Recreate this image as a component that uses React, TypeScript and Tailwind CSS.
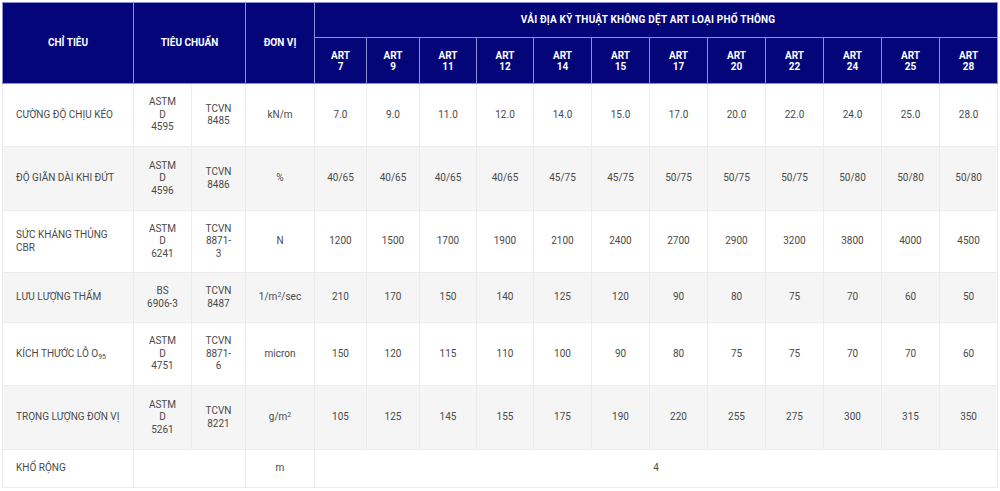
const arts = ["7", "9", "11", "12", "14", "15", "17", "20", "22", "24", "25", "28"];
const artWidths = [52, 53, 57, 57, 58, 58, 58, 58, 58, 58, 58, 58];

type Row = {
  name: React.ReactNode;
  astm: React.ReactNode;
  tcvn: React.ReactNode;
  unit: React.ReactNode;
  values: string[];
  h: string;
};

const rows: Row[] = [
  {
    name: "CƯỜNG ĐỘ CHỊU KÉO",
    astm: <>ASTM<br />D<br />4595</>,
    tcvn: <>TCVN<br />8485</>,
    unit: "kN/m",
    values: ["7.0", "9.0", "11.0", "12.0", "14.0", "15.0", "17.0", "20.0", "22.0", "24.0", "25.0", "28.0"],
    h: "h-[63px]",
  },
  {
    name: "ĐỘ GIÃN DÀI KHI ĐỨT",
    astm: <>ASTM<br />D<br />4596</>,
    tcvn: <>TCVN<br />8486</>,
    unit: "%",
    values: ["40/65", "40/65", "40/65", "40/65", "45/75", "45/75", "50/75", "50/75", "50/75", "50/80", "50/80", "50/80"],
    h: "h-[64px]",
  },
  {
    name: <>SỨC KHÁNG THỦNG<br />CBR</>,
    astm: <>ASTM<br />D<br />6241</>,
    tcvn: <>TCVN<br />8871-<br />3</>,
    unit: "N",
    values: ["1200", "1500", "1700", "1900", "2100", "2400", "2700", "2900", "3200", "3800", "4000", "4500"],
    h: "h-[62px]",
  },
  {
    name: "LƯU LƯỢNG THẤM",
    astm: <>BS<br />6906-3</>,
    tcvn: <>TCVN<br />8487</>,
    unit: <>1/m<sup className="text-[7px]">2</sup>/sec</>,
    values: ["210", "170", "150", "140", "125", "120", "90", "80", "75", "70", "60", "50"],
    h: "h-[50px]",
  },
  {
    name: <>KÍCH THƯỚC LỖ O<sub className="text-[7px]">95</sub></>,
    astm: <>ASTM<br />D<br />4751</>,
    tcvn: <>TCVN<br />8871-<br />6</>,
    unit: "micron",
    values: ["150", "120", "115", "110", "100", "90", "80", "75", "75", "70", "70", "60"],
    h: "h-[63px]",
  },
  {
    name: "TRỌNG LƯỢNG ĐƠN VỊ",
    astm: <>ASTM<br />D<br />5261</>,
    tcvn: <>TCVN<br />8221</>,
    unit: <>g/m<sup className="text-[7px]">2</sup></>,
    values: ["105", "125", "145", "155", "175", "190", "220", "255", "275", "300", "315", "350"],
    h: "h-[64px]",
  },
];

const th = "border border-[#8e8ed8] bg-[#05057a] text-white font-bold text-[10px] text-center align-middle";
const td = "border border-[#ececec] py-2 text-center align-middle";
const first = "border border-[#ececec] py-2 pl-[13px] pr-1 text-left align-middle whitespace-nowrap";

export default function App() {
  return (
    <div className="w-[1000px] h-[491px] bg-white px-[2px] pt-[2px]" style={{ fontFamily: "Roboto, 'Noto Sans', sans-serif" }}>
      <table className="table-fixed border-collapse w-[995px] text-[10px] leading-[12.5px] text-[#4a4a4a] border border-[#e3e3e3]">
        <colgroup>
          <col className="w-[131px]" />
          <col className="w-[58px]" />
          <col className="w-[54px]" />
          <col className="w-[69px]" />
          {artWidths.map((w, i) => (
            <col key={i} style={{ width: w }} />
          ))}
        </colgroup>
        <thead>
          <tr className="h-[35px]">
            <th rowSpan={2} className={th}>CHỈ TIÊU</th>
            <th rowSpan={2} colSpan={2} className={th}>TIÊU CHUẨN</th>
            <th rowSpan={2} className={th}>ĐƠN VỊ</th>
            <th colSpan={12} className={`${th} tracking-[0.02em] pr-[16px]`}>VẢI ĐỊA KỸ THUẬT KHÔNG DỆT ART LOẠI PHỔ THÔNG</th>
          </tr>
          <tr className="h-[46px]">
            {arts.map((a) => (
              <th key={a} className={`${th} leading-[11px]`}>
                ART<br />{a}
              </th>
            ))}
          </tr>
        </thead>
        <tbody>
          {rows.map((r, i) => (
            <tr key={i} className={`${r.h} ${i % 2 === 1 ? "bg-[#f5f5f5]" : "bg-white"}`}>
              <td className={first}>{r.name}</td>
              <td className={td}>{r.astm}</td>
              <td className={td}>{r.tcvn}</td>
              <td className={td}>{r.unit}</td>
              {r.values.map((v, j) => (
                <td key={j} className={td}>{v}</td>
              ))}
            </tr>
          ))}
          <tr className="h-[38px] bg-white">
            <td className={first}>KHỔ RỘNG</td>
            <td colSpan={2} className={td}></td>
            <td className={td}>m</td>
            <td colSpan={12} className={td}>4</td>
          </tr>
        </tbody>
      </table>
    </div>
  );
}
